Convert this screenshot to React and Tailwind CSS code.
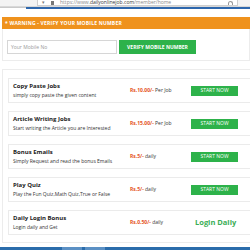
const jobs = [
  { title: "Copy Paste Jobs", desc: "simply copy paste the given content", price: "Rs.10.00/-", unit: "Per Job" },
  { title: "Article Writing Jobs", desc: "Start writing the Article you are Interested", price: "Rs.15.00/-", unit: "Per Job" },
  { title: "Bonus Emails", desc: "Simply Request and read the bonus Emails", price: "Rs.5/-", unit: "daily" },
  { title: "Play Quiz", desc: "Play the Fun Quiz,Math Quiz,True or False", price: "Rs.5/-", unit: "daily" },
  { title: "Daily Login Bonus", desc: "Login daily and Get", price: "Rs.0.50/-", unit: "daily", login: true },
];

export default function App() {
  return (
    <div className="w-[250px] h-[250px] overflow-hidden bg-white flex flex-col" style={{ fontFamily: '"Open Sans", "Liberation Sans", sans-serif' }}>
      {/* browser chrome */}
      <div className="h-[7px] flex bg-[#f3f3f3] border-b border-[#d8d8d8]">
        <div className="w-[37px]" />
        <div className="flex-1 mr-[12px] bg-white border-x border-b border-[#cfcfcf] flex items-center overflow-hidden relative">
          <span className="text-[#7a7a7a] text-[5px] leading-none ml-[4px]">▾</span>
          <span className="ml-[6px] w-[3px] h-[4px] bg-[#777]" />
          <span className="ml-[6px] text-[5px] leading-none text-[#888] whitespace-nowrap">https://www.<span className="text-[#333]">dailyonlinejob.com</span>/member/home</span>
          <span className="absolute right-[4px] bottom-[0px] w-[5px] h-[4px] rounded-t-full border border-b-0 border-[#999]" />
        </div>
      </div>
      <div className="h-[2px] flex">
        <div className="w-[26px] h-[1px] bg-[#c9c9c9]" />
        <div className="flex-1 bg-[#2e67ad]" />
      </div>
      <div className="h-[8px]" />
      {/* warning */}
      <div className="ml-[2px] h-[12px] bg-[#ef921d] flex items-center pl-[3px]">
        <span className="text-white text-[5px] font-bold leading-none tracking-[0.2px] whitespace-nowrap">* WARNING - VERIFY YOUR MOBILE NUMBER</span>
      </div>
      {/* verify card */}
      <div className="ml-[2px] border border-t-0 border-[#ececec] pl-[4px] pt-[11px] pb-[6px] flex">
        <div className="w-[110px] h-[14px] border border-[#d6d6d6] flex items-center pl-[3px]">
          <span className="text-[5px] text-[#9a9a9a] leading-none">Your Mobile No</span>
        </div>
        <div className="ml-[2px] w-[77px] h-[14px] bg-[#2db24a] flex items-center justify-center">
          <span className="text-white text-[5px] font-bold leading-none whitespace-nowrap">VERIFY MOBILE NUMBER</span>
        </div>
      </div>
      <div className="h-[8px]" />
      {/* jobs card */}
      <div className="ml-[2px] border border-r-0 border-[#ececec] pl-[5px] pt-[8px] pb-[7px] flex flex-col gap-[8px]">
        {jobs.map((j) => (
          <div key={j.title} className="h-[25px] border border-r-0 border-[#ebebeb] grid grid-cols-[117px_61px_1fr] items-center pl-[4px]">
            <div className="flex flex-col">
              <span className="text-[6px] font-bold text-[#222] leading-[8px] whitespace-nowrap">{j.title}</span>
              <span className="text-[5px] text-[#333] leading-[8px] mt-[1px] whitespace-nowrap">{j.desc}</span>
            </div>
            <div className="text-[5px] leading-none whitespace-nowrap">
              <span className="font-bold text-[#e4521c]">{j.price}</span>
              <span className="text-[#333]"> {j.unit}</span>
            </div>
            {j.login ? (
              <span className="ml-[4px] text-[7.5px] font-bold text-[#3aae55] leading-none whitespace-nowrap">Login Daily</span>
            ) : (
              <div className="w-[47px] h-[10px] bg-[#2db24a] flex items-center justify-center">
                <span className="text-white text-[5px] leading-none whitespace-nowrap">START NOW</span>
              </div>
            )}
          </div>
        ))}
      </div>
      <div className="flex-1" />
      {/* taskbar */}
      <div className="h-[3px] bg-[#2a6cab] flex">
        <div className="w-[62px]" />
        <div className="w-[20px] bg-[#5b90c4]" />
        <div className="w-[3px]" />
        <div className="w-[20px] bg-[#5b90c4]" />
      </div>
    </div>
  );
}
